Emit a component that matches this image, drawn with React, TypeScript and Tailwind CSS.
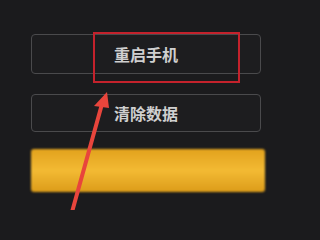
export default function App() {
  const font = { fontFamily: '"Noto Sans CJK SC", "Noto Sans", sans-serif' };

  return (
    <div
      className="relative w-full min-w-[281px] h-screen min-h-[210px] overflow-hidden bg-[#1b1b1d]"
      style={font}
    >
      <div className="flex flex-col pt-[34px] pl-[31px]">
        <button className="flex w-[230px] h-[40px] items-center justify-center rounded-[4px] border-[1.5px] border-[#4a4a4c] bg-[#1d1d1f] text-[16px] font-bold text-[#cfcfcf]">
          重启手机
        </button>
        <button className="mt-[20px] flex w-[230px] h-[38px] items-center justify-center rounded-[4px] border-[1.5px] border-[#4a4a4c] bg-[#1d1d1f] text-[16px] font-bold text-[#cfcfcf]">
          清除数据
        </button>
        <div className="mt-[17px] w-[234px] h-[43px] rounded-[3px] bg-gradient-to-b from-[#e2a21c] via-[#f3ba33] to-[#dc9c18] blur-[1px]" />
      </div>

      {/* red highlight box */}
      <div className="absolute left-[93px] top-[32px] w-[147px] h-[51px] border-2 border-[#c4222c]" />

      {/* red arrow */}
      <svg
        className="absolute left-0 top-0"
        width="281"
        height="210"
        viewBox="0 0 281 210"
      >
        <line
          x1="72"
          y1="212"
          x2="102"
          y2="104"
          stroke="#e8453c"
          strokeWidth="4"
          strokeLinecap="round"
        />
        <polygon points="107,92 94,106 109,108" fill="#e8453c" />
      </svg>
    </div>
  );
}
